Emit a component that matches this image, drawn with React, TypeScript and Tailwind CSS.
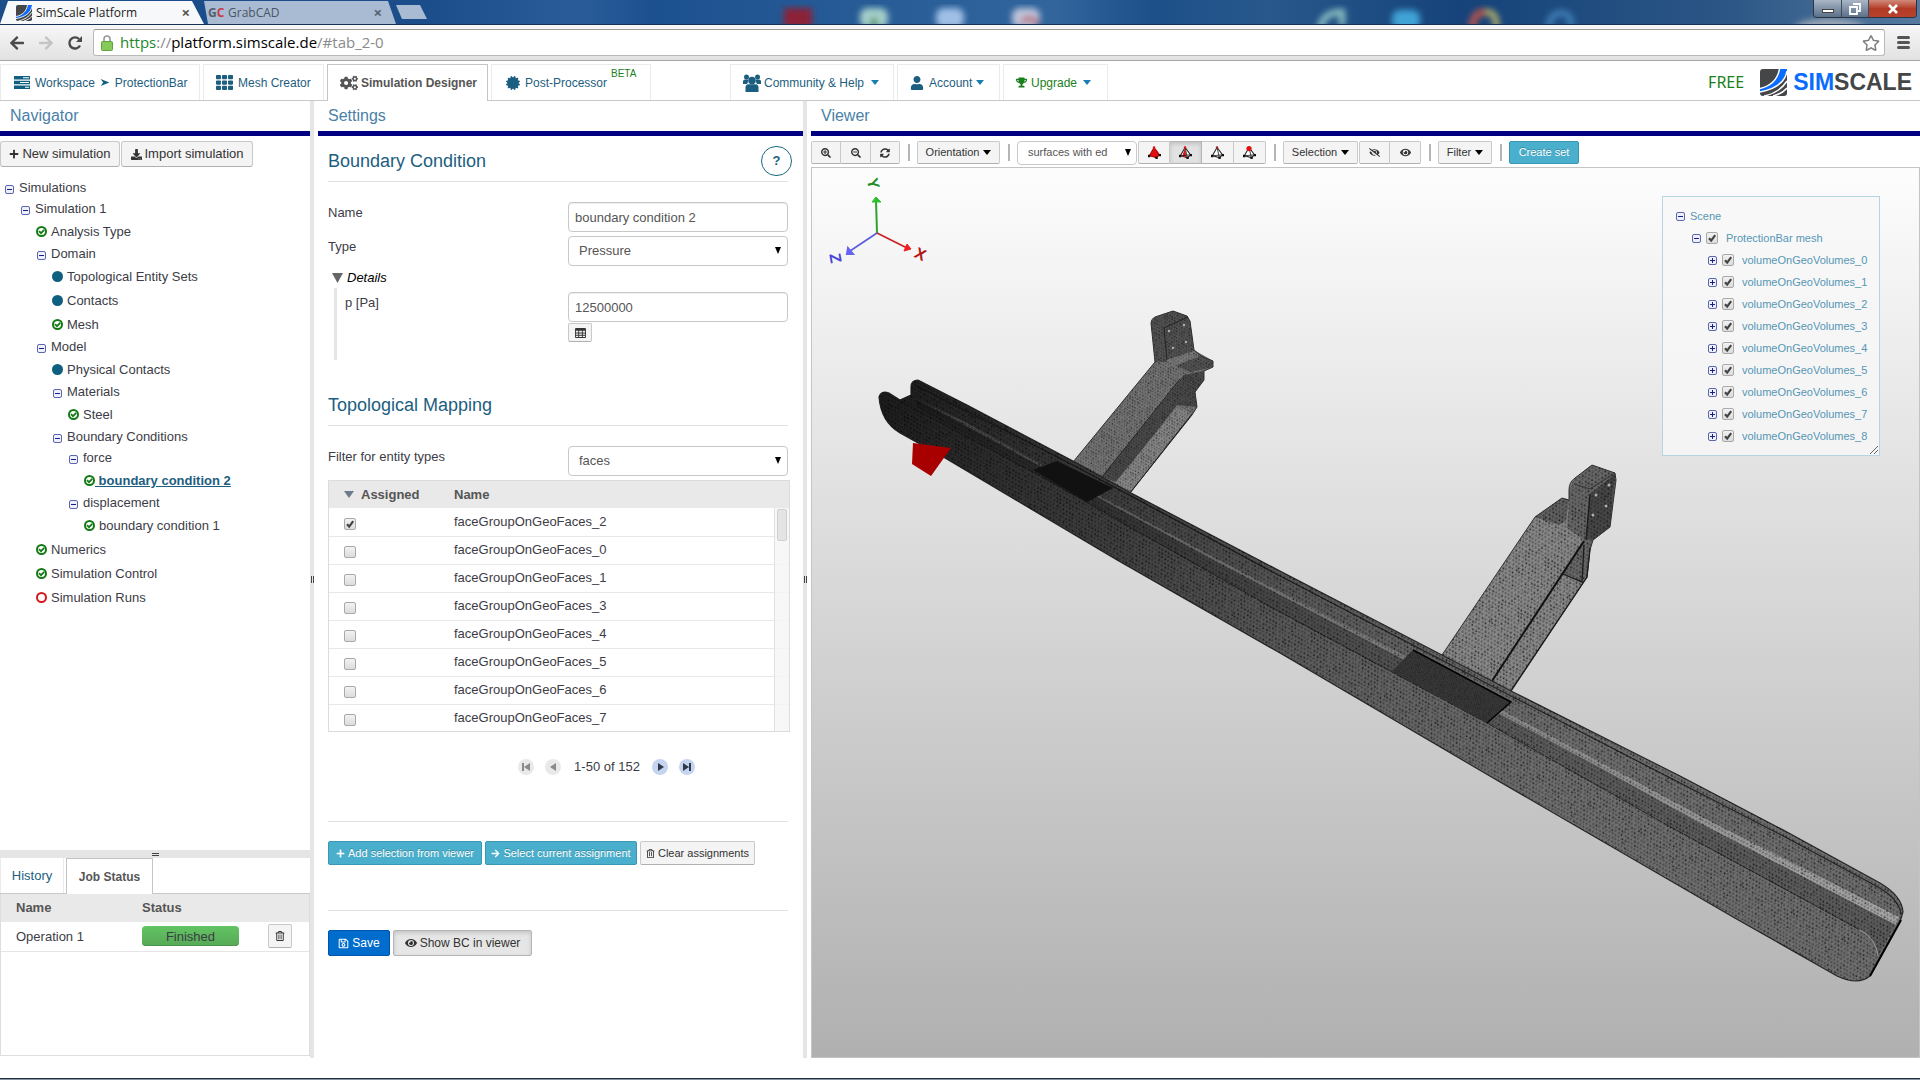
import { useState } from "react";
import type { ReactNode } from "react";
import {
  FaArrowLeft,
  FaArrowRight,
  FaCertificate,
  FaCogs,
  FaDownload,
  FaEye,
  FaEyeSlash,
  FaPlus,
  FaRegSave,
  FaRegStar,
  FaRegTrashAlt,
  FaSearchMinus,
  FaSearchPlus,
  FaSyncAlt,
  FaTh,
  FaTrophy,
  FaUser,
} from "react-icons/fa";

interface TreeRow {
  level: number;
  label: string;
  icon: "folder" | "ok" | "dot" | "ring";
  selected?: boolean;
}

const treeRows: TreeRow[] = [
  { level: 0, label: "Simulations", icon: "folder" },
  { level: 1, label: "Simulation 1", icon: "folder" },
  { level: 2, label: "Analysis Type", icon: "ok" },
  { level: 2, label: "Domain", icon: "folder" },
  { level: 3, label: "Topological Entity Sets", icon: "dot" },
  { level: 3, label: "Contacts", icon: "dot" },
  { level: 3, label: "Mesh", icon: "ok" },
  { level: 2, label: "Model", icon: "folder" },
  { level: 3, label: "Physical Contacts", icon: "dot" },
  { level: 3, label: "Materials", icon: "folder" },
  { level: 4, label: "Steel", icon: "ok" },
  { level: 3, label: "Boundary Conditions", icon: "folder" },
  { level: 4, label: "force", icon: "folder" },
  { level: 5, label: "boundary condition 2", icon: "ok", selected: true },
  { level: 4, label: "displacement", icon: "folder" },
  { level: 5, label: "boundary condition 1", icon: "ok" },
  { level: 2, label: "Numerics", icon: "ok" },
  { level: 2, label: "Simulation Control", icon: "ok" },
  { level: 2, label: "Simulation Runs", icon: "ring" },
];

const indents = ["pl-1", "pl-5", "pl-9", "pl-[52px]", "pl-[68px]", "pl-[84px]"];

const faceIds = [2, 0, 1, 3, 4, 5, 6, 7];
const volumeIds = [0, 1, 2, 3, 4, 5, 6, 7, 8];

const greyButton =
  "flex items-center justify-center border border-[#c9c9c9] border-b-[#b0b0b0] bg-[#f4f4f4] text-[#333]";
const tealButton =
  "flex items-center justify-center border border-[#3a98b5] bg-[#49afcd] text-white [text-shadow:0_-1px_0_rgba(0,0,0,0.25)]";
const fieldBox =
  "h-[30px] w-[220px] rounded border border-[#c8c8c8] bg-white text-[13px] text-[#555]";

function Toggle({ open }: { open: boolean }) {
  return (
    <svg viewBox="0 0 9 9" className="size-[9px] shrink-0">
      <rect x="0.5" y="0.5" width="8" height="8" rx="1.5" fill="#eef0fb" stroke="#5b66b0" />
      <path d={open ? "M2 4.5H7" : "M2 4.5H7M4.5 2V7"} stroke="#1c1c8c" />
    </svg>
  );
}

function StatusIcon({ icon }: { icon: TreeRow["icon"] }) {
  if (icon === "folder") {
    return (
      <span className="flex w-[11px] justify-center pt-[3px]">
        <Toggle open />
      </span>
    );
  }
  return (
    <svg viewBox="0 0 11 11" className="size-[11px] shrink-0">
      {icon === "dot" && <circle cx="5.5" cy="5.5" r="5.5" fill="#0f5f80" />}
      {icon === "ring" && <circle cx="5.5" cy="5.5" r="4.5" fill="none" stroke="#d3191e" strokeWidth="2" />}
      {icon === "ok" && (
        <>
          <circle cx="5.5" cy="5.5" r="4.5" fill="none" stroke="#137a13" strokeWidth="2" />
          <path d="M3 5.2L5 7.2L8.2 3.9" fill="none" stroke="#137a13" strokeWidth="1.8" />
        </>
      )}
    </svg>
  );
}

function Tick({ id, label, defaultChecked }: { id: string; label: string; defaultChecked?: boolean }) {
  return (
    <span className="relative flex size-3 shrink-0">
      <input
        id={id}
        type="checkbox"
        aria-label={label}
        defaultChecked={defaultChecked}
        className="peer size-3 appearance-none rounded-[2px] border border-[#a9a9a9] bg-linear-to-b from-[#f2f2f2] to-[#dcdcdc]"
      />
      <svg viewBox="0 0 12 12" className="pointer-events-none absolute inset-0 hidden size-3 peer-checked:block">
        <path d="M3 6.2L5.2 8.6L9.2 3.2" fill="none" stroke="#444" strokeWidth="2.2" />
      </svg>
    </span>
  );
}

function Caret({ className }: { className?: string }) {
  return (
    <svg viewBox="0 0 8 5" className={`h-[5px] w-2 shrink-0 ${className ?? ""}`}>
      <path d="M0 0H8L4 5Z" fill="currentColor" />
    </svg>
  );
}

function SelectArrow() {
  return (
    <svg viewBox="0 0 6 7" className="pointer-events-none absolute right-[7px] top-[11px] h-[7px] w-1.5">
      <path d="M0 0H6L3 7Z" fill="#000" />
    </svg>
  );
}

function GroupIcon({ className }: { className: string }) {
  return (
    <svg viewBox="0 0 18 18" className={className} fill="currentColor">
      <circle cx="3.500" cy="3" r="2.500" />
      <circle cx="14.500" cy="3" r="2.500" />
      <path d="M0 10V7.500Q0 5.500 2 5.500H5V8L4 10ZM18 10V7.500Q18 5.500 16 5.500H13V8L14 10Z" />
      <circle cx="9" cy="6.500" r="3.800" />
      <path d="M2.500 18V13.500Q2.500 10.500 5.500 10.300H12.500Q15.500 10.500 15.500 13.500V18Z" />
    </svg>
  );
}

function TableIcon({ className }: { className: string }) {
  return (
    <svg viewBox="0 0 12 11" className={className}>
      <rect width="12" height="11" rx="1" fill="#333" />
      <path
        d="M1 3H3.500V5H1ZM4.500 3H7.500V5H4.500ZM8.500 3H11V5H8.500ZM1 6H3.500V7.500H1ZM4.500 6H7.500V7.500H4.500ZM8.500 6H11V7.500H8.500ZM1 8.500H3.500V10H1ZM4.500 8.500H7.500V10H4.500ZM8.500 8.500H11V10H8.500Z"
        fill="#f4f4f4"
      />
    </svg>
  );
}

function Logo({ className }: { className: string }) {
  return (
    <svg viewBox="0 0 27 27" className={className}>
      <rect width="27" height="27" rx="3" fill="#444648" />
      <path d="M0 20C11 17 18 11 20 0H27C26 13 17 20 0 23Z" fill="#0a6cff" />
      <path
        d="M0 19.5C11 17 17.500 11 19.500 0M0 23C15 20 25 14 27 2M4 27C14 25 22 20 27 12M13 27C19 25.500 24 22.500 27 19"
        fill="none"
        stroke="#fff"
        strokeWidth="1.5"
      />
    </svg>
  );
}

function TitleBar() {
  return (
    <div className="relative flex h-[25px] items-end overflow-hidden border-b border-[#16305a] bg-linear-to-r from-[#1d4e89] via-[#2d629b] to-[#2a5a8c]">
      <svg width="1920" height="25" className="absolute left-0 top-0">
        <defs>
          <filter id="glass">
            <feGaussianBlur stdDeviation="3" />
          </filter>
          <linearGradient id="sky">
            <stop offset="0.22" stopColor="#1b4d8a" />
            <stop offset="0.3" stopColor="#2a5c99" />
            <stop offset="0.34" stopColor="#1c5190" />
            <stop offset="0.55" stopColor="#31659c" />
            <stop offset="0.6" stopColor="#1d4f88" />
            <stop offset="0.66" stopColor="#28588c" />
            <stop offset="0.76" stopColor="#15437a" />
            <stop offset="0.9" stopColor="#2b5685" />
            <stop offset="1" stopColor="#55799f" />
          </linearGradient>
        </defs>
        <rect width="1920" height="25" fill="url(#sky)" />
        <g filter="url(#glass)">
          <rect x="784" y="8" width="28" height="20" fill="#8c2338" />
          <rect x="860" y="8" width="28" height="20" rx="8" fill="#a5cfc9" />
          <path d="M874 18V28" stroke="#3c8c50" strokeWidth="6" />
          <rect x="936" y="8" width="28" height="20" rx="8" fill="#9fbfe6" />
          <rect x="1012" y="8" width="28" height="20" rx="8" fill="#bfc4dc" />
          <path d="M1022 22Q1030 14 1038 24" stroke="#b8403c" strokeWidth="4" fill="none" />
          <path d="M1320 30Q1322 12 1342 12L1342 26" stroke="#8fc4c4" strokeWidth="6" fill="none" />
          <rect x="1392" y="10" width="28" height="20" rx="8" fill="#3fa3d6" />
          <path d="M1472 30Q1472 12 1486 12" stroke="#b8524e" strokeWidth="7" fill="none" />
          <path d="M1486 12Q1498 12 1496 30" stroke="#b9b268" strokeWidth="6" fill="none" />
          <path d="M1548 30Q1550 12 1562 13T1570 30" stroke="#4080b8" strokeWidth="6" fill="none" />
          <ellipse cx="1830" cy="32" rx="38" ry="14" fill="#98a4b4" />
        </g>
      </svg>

      <div className="relative flex h-[23px] font-['Open_Sans',sans-serif] text-xs text-[#222]">
        <div className="flex w-[204px] items-center bg-[#f7f8f9] pl-4 pr-[14px] [clip-path:polygon(0_100%,8px_0,192px_0,100%_100%)]">
          <Logo className="size-4" />
          <span className="ml-1 flex-1">SimScale Platform</span>
          <button aria-label="Close tab" className="text-[15px] leading-none font-bold text-[#555]">×</button>
        </div>
        <div className="flex w-[192px] items-center bg-[#a9bbd2] pl-1 pr-[14px] text-[#4a5563] [clip-path:polygon(0_0,184px_0,100%_100%,4px_100%)]">
          <span className="w-5 font-bold text-[#55606e]">
            G<span className="text-[#c93b43]">C</span>
          </span>
          <span className="flex-1">GrabCAD</span>
          <button aria-label="Close tab" className="text-[15px] leading-none font-bold text-[#55606e]">×</button>
        </div>
        <button
          aria-label="New tab"
          className="mt-1 h-[14px] w-[31px] bg-[#a9bbd2] [clip-path:polygon(0_0,24px_0,100%_100%,6px_100%)]"
        />
      </div>

      <div className="relative mr-[3px] ml-auto flex h-[18px] self-start overflow-hidden rounded-b border border-t-0 border-[#2b3443] text-white">
        <button aria-label="Minimize" className="flex w-7 items-center justify-center border-r border-[#3c4a5e] bg-linear-to-b from-[#a9b6c6] to-[#5c7089]">
          <span className="mt-1 h-1 w-3 border border-[#444] bg-white" />
        </button>
        <button aria-label="Restore" className="flex w-[27px] items-center justify-center border-r border-[#3c4a5e] bg-linear-to-b from-[#a9b6c6] to-[#5c7089]">
          <svg viewBox="0 0 12 12" className="size-3">
            <path d="M4 1H11V8H9M1 4H8V11H1Z" fill="none" stroke="#fff" strokeWidth="1.800" />
          </svg>
        </button>
        <button aria-label="Close" className="flex w-[47px] items-center justify-center bg-linear-to-b from-[#d08a7a] via-[#b23a26] to-[#b8432c]">
          <svg viewBox="0 0 10 10" className="size-[10px]">
            <path d="M1 1L9 9M9 1L1 9" stroke="#fff" strokeWidth="2.600" />
          </svg>
        </button>
      </div>
    </div>
  );
}

function AddressBar() {
  return (
    <div className="flex h-9 items-center border-b border-[#a5a5a5] bg-linear-to-b from-[#f7f7f7] to-[#e2e2e2] pl-[9px] pr-1 text-[#4a4a4a]">
      <button aria-label="Back"><FaArrowLeft className="size-4" /></button>
      <button aria-label="Forward" className="ml-[13px] text-[#c4c4c4]"><FaArrowRight className="size-4" /></button>
      <button aria-label="Reload" className="ml-[13px]">
        <svg viewBox="0 0 16 16" className="size-4">
          <path d="M13 10.500A5.600 5.600 0 1 1 12 4" fill="none" stroke="#4a4a4a" strokeWidth="2.400" />
          <path d="M15 1V7H9Z" fill="#4a4a4a" />
        </svg>
      </button>
      <div className="ml-[10px] flex h-[27px] flex-1 items-center rounded-[3px] border border-[#b9b9b9] border-t-[#a09a9a] bg-white pl-[7px] pr-1">
        <svg viewBox="0 0 12 16" className="h-4 w-3">
          <path d="M3 7V4A3 3 0 0 1 9 4V7" fill="none" stroke="#999" strokeWidth="1.600" />
          <rect x="0.5" y="6.500" width="11" height="9" rx="1" fill="#86c95a" stroke="#5da53a" />
        </svg>
        <a href="#tab_2-0" className="ml-[7px] flex-1 font-['Open_Sans',sans-serif] text-[15px] text-[#8a8a8a]">
          <span className="text-[#26862c]">https</span>://<span className="text-black">platform.simscale.de</span>/#tab_2-0
        </a>
        <FaRegStar className="size-[18px] text-[#808080]" />
      </div>
      <button aria-label="Menu" className="ml-3 flex flex-col gap-[2px] pr-1.5">
        <span className="h-[3px] w-[13px] rounded-sm bg-[#555]" />
        <span className="h-[3px] w-[13px] rounded-sm bg-[#555]" />
        <span className="h-[3px] w-[13px] rounded-sm bg-[#555]" />
      </button>
    </div>
  );
}

function MainNav() {
  const tab = "flex h-9 items-center border border-b-0 border-[#ebebeb]";
  return (
    <nav className="flex h-10 items-end gap-[3px] border-b border-[#c9c9c9] text-xs text-[#1c5e80]">
      <a href="#workspace" className={`${tab} w-[200px] pl-[13px]`}>
        <svg viewBox="0 0 16 13" className="mr-[5px] h-[13px] w-4">
          <path d="M0 0H16V3.500H0ZM0 4.700H16V8.200H0ZM0 9.500H16V13H0Z" fill="#0f5f80" />
          <path d="M9 1.200H15V2.300H9ZM6 5.900H15V7H6ZM11 10.700H15V11.800H11Z" fill="#fff" />
        </svg>
        Workspace
        <svg viewBox="0 0 10 8" className="mx-[5px] h-[7px] w-[10px]">
          <path d="M0 0L10 4L0 8L3 4Z" fill="#0f5f80" />
        </svg>
        ProtectionBar
      </a>
      <a href="#mesh" className={`${tab} w-[121px] pl-3`}>
        <FaTh className="mr-[5px] size-[17px]" />
        Mesh Creator
      </a>
      <a href="#designer" className="-mb-px flex h-[37px] w-[161px] items-center border border-b-0 border-[#c4c4c4] bg-white pb-px pl-3 font-bold text-[#555]">
        <FaCogs className="mr-[3px] size-[18px]" />
        Simulation Designer
      </a>
      <a href="#post" className={`${tab} w-[160px] pl-[14px]`}>
        <FaCertificate className="mr-[5px] size-[14px]" />
        Post-Processor
        <span className="ml-1 self-start pt-0.5 text-[10px] text-[#1b7f1b]">BETA</span>
      </a>
      <a href="#community" className={`${tab} ml-[76px] w-[164px] pl-3`}>
        <GroupIcon className="mr-[3px] size-[18px]" />
        Community &amp; Help
        <Caret className="ml-[7px] text-[#1a7db0]" />
      </a>
      <a href="#account" className={`${tab} w-[103px] pl-3`}>
        <FaUser className="mr-[5px] size-[14px]" />
        Account
        <Caret className="ml-1 text-[#1a7db0]" />
      </a>
      <a href="#upgrade" className={`${tab} w-[105px] pl-3 text-[#1b7f1b]`}>
        <FaTrophy className="mr-1 size-[11px]" />
        Upgrade
        <Caret className="ml-1.5 text-[#1a7db0]" />
      </a>
      <div className="mr-2 ml-auto flex h-9 items-center">
        <span className="font-['Noto_Sans',sans-serif] text-base text-[#1b7f1b]">FREE</span>
        <Logo className="ml-4 size-[27px]" />
        <span className="ml-1.5 text-[23px] leading-none font-bold text-[#444648]">
          <span className="text-[#0a6cff]">SIM</span>SCALE
        </span>
      </div>
    </nav>
  );
}

function PanelTitle({ children }: { children: ReactNode }) {
  return (
    <h2 className="h-[35px] shrink-0 border-b-[5px] border-[#000080] pl-[10px] text-base leading-[30px] text-[#4a7fa7]">
      {children}
    </h2>
  );
}

function Splitter() {
  return (
    <div className="mr-1 flex w-1 shrink-0 items-center justify-center gap-px bg-[#e5e5e5]">
      <span className="h-[7px] w-px bg-[#444]" />
      <span className="h-[7px] w-px bg-[#444]" />
    </div>
  );
}

function Navigator() {
  const bigButton = `${greyButton} h-[26px] gap-[3px] rounded-[3px] text-[13px]`;
  return (
    <section className="flex w-[310px] shrink-0 flex-col">
      <PanelTitle>Navigator</PanelTitle>
      <div className="flex gap-px pt-[5px]">
        <button className={`${bigButton} w-[120px]`}>
          <FaPlus className="size-[10px]" />
          New simulation
        </button>
        <button className={`${bigButton} w-[132px]`}>
          <FaDownload className="size-[11px]" />
          Import simulation
        </button>
      </div>
      <ul className="flex-1 pt-[10px] text-[13px] text-[#3c3c46]">
        {treeRows.map((row) => (
          <li
            key={row.label}
            className={`flex items-center gap-1 ${row.icon === "folder" ? "h-[21px]" : "h-6 pt-px"} ${indents[row.level]}`}
          >
            <StatusIcon icon={row.icon} />
            {row.selected ? (
              <a href="#bc2" className="-ml-1 font-bold whitespace-pre text-[#1c5e80] underline">{` ${row.label}`}</a>
            ) : (
              <span>{row.label}</span>
            )}
          </li>
        ))}
      </ul>

      <div className="flex h-2 shrink-0 flex-col items-center justify-center gap-px bg-[#e5e5e5]">
        <span className="h-px w-[7px] bg-[#444]" />
        <span className="h-px w-[7px] bg-[#444]" />
      </div>
      <div className="flex h-9 shrink-0 gap-0.5 border-b border-[#c9c9c9] text-[13px]">
        <button className="w-16 border-x border-[#ebebeb] text-[#1c5e80]">History</button>
        <button className="-mb-px w-[87px] border border-b-0 border-[#c4c4c4] bg-white text-xs font-bold text-[#555]">
          Job Status
        </button>
      </div>
      <div className="mb-0.5 h-[162px] shrink-0 border-x border-b border-[#dedede]">
        <table className="w-full table-fixed text-left text-[13px] text-[#3c3c46]">
          <thead>
            <tr className="h-7 bg-[#e9e9e9] text-[#555]">
              <th className="w-[141px] pl-[15px]">Name</th>
              <th className="w-[126px]">Status</th>
              <th aria-label="Actions" />
            </tr>
          </thead>
          <tbody>
            <tr className="h-[29px] border-b border-[#e5e5e5]">
              <td className="pl-[15px]">Operation 1</td>
              <td>
                <span className="flex h-5 w-[97px] items-center justify-center rounded bg-linear-to-b from-[#62c462] to-[#57a957] shadow-[inset_0_-1px_0_#4a964a]">
                  Finished
                </span>
              </td>
              <td>
                <button aria-label="Delete operation" className={`${greyButton} h-6 w-6 rounded-[2px]`}>
                  <FaRegTrashAlt className="size-[10px]" />
                </button>
              </td>
            </tr>
          </tbody>
        </table>
      </div>
    </section>
  );
}

function SectionHeading({ children, extra }: { children: ReactNode; extra?: ReactNode }) {
  return (
    <div className="flex h-[46px] items-center justify-between border-b border-[#e2e2e2] pt-1">
      <h3 className="text-lg leading-6 text-[#1c5e80]">{children}</h3>
      {extra}
    </div>
  );
}

function Settings() {
  const [name, setName] = useState("boundary condition 2");
  const [pressure, setPressure] = useState("12500000");
  const pager = "flex size-4 items-center justify-center rounded-full";

  return (
    <section className="flex w-[485px] shrink-0 flex-col">
      <PanelTitle>Settings</PanelTitle>
      <div className="pl-[10px] pr-[15px] text-[13px] text-[#3c3c46]">
        <SectionHeading
          extra={
            <button className="-mr-1 h-[30px] w-[31px] rounded-full border border-[#1c6a80] font-bold text-[#1c5e80]">
              ?
            </button>
          }
        >
          Boundary Condition
        </SectionHeading>

        <div className="mt-5 flex justify-between">
          <label htmlFor="bc-name" className="leading-[22px]">Name</label>
          <input
            id="bc-name"
            value={name}
            onChange={(e) => setName(e.target.value)}
            className={`${fieldBox} px-1.5 shadow-[inset_0_1px_1px_rgba(0,0,0,0.075)]`}
          />
        </div>
        <div className="mt-1 flex justify-between">
          <label htmlFor="bc-type" className="leading-[22px]">Type</label>
          <span className="relative">
            <select id="bc-type" className={`${fieldBox} appearance-none px-[10px]`}>
              <option>Pressure</option>
            </select>
            <SelectArrow />
          </span>
        </div>
        <button className="mt-1 ml-1 flex h-4 items-center gap-1 text-black italic">
          <svg viewBox="0 0 11 10" className="h-[10px] w-[11px]">
            <path d="M0 0H11L5.500 10Z" fill="#666" />
          </svg>
          Details
        </button>
        <div className="mt-0.5 ml-1.5 flex h-[72px] justify-between border-l-[3px] border-[#e5e5e5] pt-1 pl-2">
          <label htmlFor="bc-pressure" className="leading-[22px]">p [Pa]</label>
          <div>
            <input
              id="bc-pressure"
              value={pressure}
              onChange={(e) => setPressure(e.target.value)}
              className={`${fieldBox} block px-1.5 shadow-[inset_0_1px_1px_rgba(0,0,0,0.075)]`}
            />
            <button aria-label="Open table" className={`${greyButton} mt-px h-[19px] w-6 rounded-[2px]`}>
              <TableIcon className="h-[10px] w-[11px]" />
            </button>
          </div>
        </div>

        <div className="mt-5">
          <SectionHeading>Topological Mapping</SectionHeading>
        </div>
        <div className="mt-5 flex justify-between">
          <label htmlFor="entity-filter" className="leading-[22px]">Filter for entity types</label>
          <span className="relative">
            <select id="entity-filter" className={`${fieldBox} appearance-none px-[10px]`}>
              <option>faces</option>
            </select>
            <SelectArrow />
          </span>
        </div>

        <div className="relative mt-1 -mr-0.5 h-[252px] overflow-hidden border border-[#dcdcdc]">
          <table className="w-full table-fixed text-left">
            <thead>
              <tr className="h-[27px] bg-[#e9e9e9] text-[#555]">
                <th className="w-[125px] pl-[15px]">
                  <span className="flex items-center gap-[7px]">
                    <svg viewBox="0 0 10 7" className="h-[7px] w-[10px]">
                      <path d="M0 0H10L5 7Z" fill="#6c7a8c" />
                    </svg>
                    Assigned
                  </span>
                </th>
                <th>Name</th>
              </tr>
            </thead>
            <tbody>
              {faceIds.map((id) => (
                <tr key={id} className="h-7 border-b border-[#e8e8e8]">
                  <td className="pt-1 pl-[15px]">
                    <Tick id={`face-${id}`} label={`Assign faceGroupOnGeoFaces_${id}`} defaultChecked={id === 2} />
                  </td>
                  <td>
                    <label htmlFor={`face-${id}`}>faceGroupOnGeoFaces_{id}</label>
                  </td>
                </tr>
              ))}
            </tbody>
          </table>
          <div className="absolute top-[27px] right-0 bottom-0 w-[15px] border-l border-[#e2e2e2] bg-[#f5f5f5]/80 px-0.5 pt-px">
            <div className="h-8 w-[10px] rounded-[2px] border border-[#d0d0d0] bg-[#e4e4e4]" />
          </div>
        </div>

        <div className="mt-[22px] flex h-[25px] items-center gap-[11px] pl-[190px]">
          <button aria-label="First page" className={`${pager} bg-[#e9e9e9] text-[#8a8a8a]`}>
            <svg viewBox="0 0 8 8" className="size-2"><path d="M0 0H2V8H0ZM8 0V8L2 4Z" fill="currentColor" /></svg>
          </button>
          <button aria-label="Previous page" className={`${pager} bg-[#e9e9e9] text-[#8a8a8a]`}>
            <svg viewBox="0 0 8 8" className="size-2"><path d="M7 0V8L1 4Z" fill="currentColor" /></svg>
          </button>
          <span className="w-[69px] pl-px text-center whitespace-nowrap">1-50 of 152</span>
          <button aria-label="Next page" className={`${pager} bg-[#c5d5f0] text-[#2f3b4a]`}>
            <svg viewBox="0 0 8 8" className="size-2"><path d="M2 0V8L8 4Z" fill="currentColor" /></svg>
          </button>
          <button aria-label="Last page" className={`${pager} bg-[#c5d5f0] text-[#2f3b4a]`}>
            <svg viewBox="0 0 8 8" className="size-2"><path d="M6 0H8V8H6ZM0 0V8L6 4Z" fill="currentColor" /></svg>
          </button>
        </div>

        <div className="mt-[42px] flex gap-[3px] border-t border-[#e2e2e2] pt-[19px] text-[11px]">
          <button className={`${tealButton} h-6 w-[154px] gap-[3px] rounded-[2px]`}>
            <FaPlus className="size-[9px]" />
            Add selection from viewer
          </button>
          <button className={`${tealButton} h-6 w-[152px] gap-[3px] rounded-[2px]`}>
            <FaArrowRight className="size-[9px]" />
            Select current assignment
          </button>
          <button className={`${greyButton} h-6 w-[115px] gap-[3px] rounded-[2px]`}>
            <FaRegTrashAlt className="size-[9px]" />
            Clear assignments
          </button>
        </div>
        <div className="mt-[45px] flex gap-[3px] border-t border-[#e2e2e2] pt-[19px] text-xs">
          <button className="flex h-[26px] w-[62px] items-center justify-center gap-[3px] rounded-[2px] border border-[#0055b0] bg-[#006dcc] text-white">
            <FaRegSave className="size-[11px]" />
            Save
          </button>
          <button className="flex h-[26px] w-[139px] items-center justify-center gap-[3px] rounded-[2px] border border-[#b5b5b5] bg-[#e6e6e6] text-[#333] shadow-[inset_0_2px_4px_rgba(0,0,0,0.15)]">
            <FaEye className="size-3" />
            Show BC in viewer
          </button>
        </div>
      </div>
    </section>
  );
}

const CELLS = 16;
const CELL = 4;

// Pseudo random offset, same for vertices on opposite edges so the tile repeats
function jitter(x: number, y: number, seed: number) {
  const n = Math.sin(((x + CELLS) % CELLS) * 12.9898 + ((y + CELLS) % CELLS) * 78.233 + seed) * 43758.5453;
  return n - Math.floor(n);
}

function vertex(x: number, y: number) {
  const px = (x + (y % 2) * 0.5 + jitter(x, y, 1) * 0.3) * CELL;
  const py = (y + jitter(x, y, 2) * 0.3) * CELL;
  return `${px.toFixed(1)} ${py.toFixed(1)}`;
}

function buildTile() {
  let lines = "";
  let dots = "";
  for (let x = -2; x <= CELLS; x++) {
    for (let y = -2; y <= CELLS; y++) {
      lines += `M${vertex(x + 1, y)}L${vertex(x, y)}L${vertex(x, y + 1)}`;
      lines += y % 2 ? `M${vertex(x, y)}L${vertex(x + 1, y + 1)}` : `M${vertex(x + 1, y)}L${vertex(x, y + 1)}`;
      if (jitter(x, y, 4) > 0.72) dots += `M${vertex(x, y)}h1.2v1.2h-1.2z`;
    }
  }
  return { lines, dots };
}

const tile = buildTile();

function MeshPattern({ id, transform, opacity }: { id: string; transform: string; opacity: number }) {
  const size = CELLS * CELL;
  return (
    <pattern id={id} width={size} height={size} patternUnits="userSpaceOnUse" patternTransform={transform}>
      <path d={tile.lines} fill="none" stroke="#000" strokeWidth="0.6" opacity={opacity} />
      <path d={tile.dots} fill="#000" opacity="0.9" />
    </pattern>
  );
}

const barPath =
  "M911 387Q911 380 918 380L967 405L1073 461L1133 494L1257 559L1280 571L1442 655L1513 692L1680 776L1787 832L1880 883Q1902 896 1903 912L1900 922L1870 976Q1858 986 1837 976L1733 917L1500 782L1280 653L1117 560L945 458L900 433Q881 422 879 397Q881 390 889 393L900 400L911 395Z";
const bracketA =
  "M1073 462L1155 362L1151 323Q1151 319 1155 317L1173 311L1187 316L1190 321L1194 350L1201 356L1213 361V367L1204 371V380L1195 392L1197 407L1192 415L1130 493Z";
const bracketB =
  "M1442 655L1535 517L1562 498L1569 500V490Q1569 482 1575 478L1592 465L1615 473L1616 480L1610 527L1593 540L1590 550L1587 577L1510 693Z";

function Model() {
  return (
    <svg viewBox="812 168 1107 889" preserveAspectRatio="xMinYMin meet" className="absolute inset-0 h-full w-full">
      <defs>
        <MeshPattern id="fine" transform="rotate(28) scale(0.7)" opacity={0.5} />
        <MeshPattern id="coarse" transform="rotate(28) scale(0.9)" opacity={0.45} />
        <MeshPattern id="dense" transform="rotate(40) scale(0.5)" opacity={0.7} />
        <linearGradient id="depth" gradientUnits="userSpaceOnUse" x1="880" y1="400" x2="1560" y2="760">
          <stop offset="0" stopOpacity="0.68" />
          <stop offset="0.25" stopOpacity="0.44" />
          <stop offset="0.6" stopOpacity="0.16" />
          <stop offset="1" stopOpacity="0" />
        </linearGradient>
        <linearGradient id="fade" gradientUnits="userSpaceOnUse" x1="880" y1="400" x2="1400" y2="675">
          <stop offset="0" stopColor="#fff" />
          <stop offset="1" stopColor="#000" />
        </linearGradient>
        <mask id="nearEnd" maskUnits="userSpaceOnUse" x="812" y="168" width="1107" height="889">
          <rect x="812" y="168" width="1107" height="889" fill="url(#fade)" />
        </mask>
        <linearGradient id="shine" gradientUnits="userSpaceOnUse" x1="915" y1="397" x2="1897" y2="922">
          <stop offset="0" stopColor="#555" />
          <stop offset="0.3" stopColor="#808080" />
          <stop offset="1" stopColor="#b8b8b8" />
        </linearGradient>
      </defs>

      {/* brackets */}
      <path d={bracketA} fill="#858585" />
      <path d="M1102 477L1184 375L1204 371V380L1195 392L1197 407L1177 405L1117 482Z" fill="#555" />
      <path d="M1115 483L1177 407L1192 413L1130 493Z" fill="#9a9a9a" />
      <path d="M1155 362L1151 323L1155 317L1173 311L1187 316L1190 321L1194 350L1213 361V367L1190 372L1168 362Z" fill="#5f5f5f" />
      <path d="M1166 360L1194 351L1201 356L1172 367Z" fill="#8c8c8c" />
      <path d={bracketA} fill="url(#fine)" stroke="#333" strokeWidth="1" />
      <path d="M1102 477L1180 379M1130 493L1192 414M1167 360L1164 328L1188 317" fill="none" stroke="#222" strokeWidth="1" />

      <path d={bracketB} fill="#969696" />
      <path d="M1535 517L1562 498L1569 500L1566 521L1559 525Z" fill="#6b6b6b" />
      <path d="M1569 500V490L1575 478L1592 465L1615 473L1616 480L1610 527L1593 540L1590 550L1587 577L1580 582L1563 574L1584 540L1567 528Z" fill="#727272" />
      <path d="M1590 494L1615 474L1610 527L1593 540L1586 539Z" fill="#4e4e4e" />
      <path d={bracketB} fill="url(#coarse)" stroke="#333" strokeWidth="1" />
      <path d="M1492 681L1584 541" stroke="#111" strokeWidth="2" />
      <path d="M1510 692L1587 577L1590 548M1590 494L1586 540M1563 574L1582 582L1584 545" fill="none" stroke="#1c1c1c" strokeWidth="1.300" />
      <path d="M1574 484L1590 489L1615 473" fill="none" stroke="#333" />

      <g fill="#b0b0b0">
        <circle cx="1169" cy="331" r="1.200" />
        <circle cx="1184" cy="325" r="1.200" />
        <circle cx="1173" cy="348" r="1.200" />
        <circle cx="1186" cy="342" r="1.200" />
        <circle cx="1596" cy="495" r="1.500" />
        <circle cx="1609" cy="485" r="1.500" />
        <circle cx="1593" cy="515" r="1.500" />
        <circle cx="1606" cy="506" r="1.500" />
      </g>

      {/* bar */}
      <path d={barPath} fill="#7a7a7a" />
      <path d="M915 399L1033 462L1217 560L1403 657L1500 712L1700 820L1897 922L1878 956Q1876 938 1860 930L1667 825L1487 723L1280 612L1033 472L917 408Z" fill="#666" />
      <path d={barPath} fill="url(#depth)" stroke="#2a2a2a" strokeWidth="1.200" />
      <path d="M915 398L967 423L1033 460L1217 559L1403 655L1500 709L1610 767L1700 816L1899 917L1896 925L1700 823L1610 773L1500 714L1403 659L1217 562L1033 462Z" fill="url(#shine)" />
      <path d={barPath} fill="url(#coarse)" />
      <g mask="url(#nearEnd)">
        <path d={barPath} fill="url(#dense)" opacity="0.6" />
      </g>
      <path d="M915 385L1073 465L1280 576L1513 697L1787 838L1878 887Q1899 899 1901 914" fill="none" stroke="#111" strokeWidth="1.200" opacity="0.8" />
      <path d="M900 401L1033 472L1280 612L1487 723L1667 825L1860 930" fill="none" stroke="#111" strokeDasharray="7 1" opacity="0.8" />
      <path d="M1860 930Q1876 938 1878 956" fill="none" stroke="#999" strokeWidth="1" />
      <path d="M1901 920L1870 976" stroke="#000" strokeWidth="2" />

      {/* contact areas */}
      <path d="M1033 470L1057 461L1113 488L1087 502Z" fill="#111" />
      <path d="M1392 671L1413 650L1511 702L1487 723Z" fill="#484848" />
      <path d="M1392 671L1413 650L1511 702L1487 723Z" fill="url(#dense)" />
      <path d="M1413 650L1511 702L1487 723" fill="none" stroke="#000" strokeWidth="1.500" />

      <path d="M913 443L951 448L931 476L912 464Z" fill="#a80000" />

      {/* orientation axes */}
      <path d="M877 233L876 200" stroke="#2fa32f" strokeWidth="2" />
      <path d="M872 202L876 197L881 202Z" fill="#2fc02f" stroke="#2fc02f" />
      <path d="M877 233L907 248" stroke="#c82222" strokeWidth="1.600" />
      <path d="M907 244L911 249L904 251Z" fill="#f02020" stroke="#f02020" />
      <path d="M877 233L850 251" stroke="#5a5adc" strokeWidth="1.600" />
      <path d="M848 248L847 254L853 254Z" fill="#6464f0" stroke="#6464f0" strokeWidth="2" />
      <g className="font-['Liberation_Sans',sans-serif] text-base font-bold" textAnchor="middle">
        <text transform="translate(868 185) rotate(75)" fill="#238c23">Y</text>
        <text transform="translate(918 259) rotate(25)" fill="#b01818">X</text>
        <text transform="translate(830 259) rotate(80)" fill="#4646d8">Z</text>
      </g>
    </svg>
  );
}

function SceneTree() {
  return (
    <div className="absolute top-7 right-[39px] h-[260px] w-[218px] border border-[#b5d5e2] bg-[#f7f7f7]/80 pt-2 pl-[13px] text-[11px] text-[#5596b5]">
      <div className="flex h-[22px] items-center gap-[5px]">
        <Toggle open />
        <span>Scene</span>
      </div>
      <div className="flex h-[22px] items-center gap-[5px] pl-4">
        <Toggle open />
        <Tick id="scene-mesh" label="Show ProtectionBar mesh" defaultChecked />
        <label htmlFor="scene-mesh" className="pl-[3px]">ProtectionBar mesh</label>
      </div>
      {volumeIds.map((id) => (
        <div key={id} className="flex h-[22px] items-center gap-[5px] pl-8">
          <Toggle open={false} />
          <Tick id={`volume-${id}`} label={`Show volumeOnGeoVolumes_${id}`} defaultChecked />
          <label htmlFor={`volume-${id}`} className="pl-[3px]">volumeOnGeoVolumes_{id}</label>
        </div>
      ))}
      <svg viewBox="0 0 8 8" className="absolute right-px bottom-px size-2">
        <path d="M0 8L8 0M4 8L8 4" stroke="#555" strokeWidth="0.900" />
      </svg>
    </div>
  );
}

function RenderModeIcon({ mode }: { mode: "surface" | "half" | "wire" | "point" }) {
  return (
    <svg viewBox="0 0 14 14" className="h-[13px] w-[13px]">
      <path
        d="M6.500 1.500L1.500 10.500L9 12.500L12.500 9.500Z"
        fill={mode === "surface" ? "#e01010" : "#fff"}
        stroke={mode === "surface" ? "#a00" : "#222"}
        strokeWidth="1.100"
      />
      {mode === "half" && <path d="M6.500 1.500L3.500 11L8 12Z" fill="#e01010" />}
      {mode !== "surface" && <path d="M6.500 1.500L9 12.500M1.500 10.500L12.500 9.500" stroke="#222" strokeWidth="0.900" />}
      {mode === "point" && <circle cx="6.500" cy="2.800" r="2.800" fill="#e01010" />}
      {mode !== "point" && <circle cx="6.500" cy="1.600" r="1.300" fill={mode === "wire" ? "#a22" : "#e01010"} />}
      <path d="M0 9.500H2.500V12H0ZM8 11.500H10.500V14H8ZM11.500 8.500H14V11H11.500Z" fill="#111" />
    </svg>
  );
}

function Separator() {
  return <span className="mr-[7px] ml-2 h-[17px] w-0.5 shrink-0 bg-[#b5b5b5]" />;
}

function Viewer() {
  const tool = `${greyButton} h-[23px]`;
  return (
    <section className="flex min-w-0 flex-1 flex-col">
      <PanelTitle>Viewer</PanelTitle>
      <div className="flex h-[31px] shrink-0 items-center pt-0.5 text-[11px]">
        <button aria-label="Zoom in" className={`${tool} w-[30px] rounded-l-[2px]`}><FaSearchPlus className="size-[10px]" /></button>
        <button aria-label="Zoom out" className={`${tool} w-[30px] border-l-0`}><FaSearchMinus className="size-[10px]" /></button>
        <button aria-label="Reset view" className={`${tool} w-[29px] rounded-r-[2px] border-l-0`}><FaSyncAlt className="size-[10px]" /></button>
        <Separator />
        <button className={`${tool} w-[83px] gap-1 rounded-[2px]`}>Orientation<Caret className="text-black" /></button>
        <Separator />
        <span className="relative mr-px">
          <select aria-label="Render mode" className="block h-6 w-[120px] appearance-none rounded border border-[#c8c8c8] bg-white px-[10px] text-[11px] text-[#555]">
            <option>surfaces with ed</option>
          </select>
          <svg viewBox="0 0 6 7" className="pointer-events-none absolute top-2 right-1.5 h-[7px] w-1.5">
            <path d="M0 0H6L3 7Z" fill="#000" />
          </svg>
        </span>
        <button aria-label="Surfaces" className={`${tool} w-8 rounded-l-[2px]`}><RenderModeIcon mode="surface" /></button>
        <button aria-label="Surfaces with edges" className="flex h-[23px] w-8 items-center justify-center border border-l-0 border-[#b5b5b5] bg-[#e2e2e2] shadow-[inset_0_2px_4px_rgba(0,0,0,0.15)]"><RenderModeIcon mode="half" /></button>
        <button aria-label="Wireframe" className={`${tool} w-8 border-l-0`}><RenderModeIcon mode="wire" /></button>
        <button aria-label="Points" className={`${tool} w-8 rounded-r-[2px] border-l-0`}><RenderModeIcon mode="point" /></button>
        <Separator />
        <button className={`${tool} mr-px w-[75px] gap-1 rounded-[2px]`}>Selection<Caret className="text-black" /></button>
        <button aria-label="Hide selection" className={`${tool} w-[31px] rounded-l-[2px]`}><FaEyeSlash className="size-[11px]" /></button>
        <button aria-label="Show selection" className={`${tool} w-[31px] rounded-r-[2px] border-l-0`}><FaEye className="size-[11px]" /></button>
        <Separator />
        <button className={`${tool} w-[54px] gap-1 rounded-[2px]`}>Filter<Caret className="text-black" /></button>
        <Separator />
        <button className={`${tealButton} h-[23px] w-[70px] rounded-[2px]`}>Create set</button>
      </div>
      <div className="relative flex-1 border border-[#c4c4c4] bg-linear-to-b from-[#fdfdfd] to-[#b0b0b0]">
        <Model />
        <SceneTree />
      </div>
    </section>
  );
}

export default function App() {
  return (
    <div className="flex h-screen min-h-[900px] flex-col bg-white font-['Liberation_Sans',Arial,sans-serif]">
      <TitleBar />
      <AddressBar />
      <MainNav />
      <main className="flex min-h-0 flex-1">
        <Navigator />
        <Splitter />
        <Settings />
        <Splitter />
        <Viewer />
      </main>
      <footer className="mt-5 h-0.5 shrink-0 border-t border-[#1f2f45] bg-[#8a94a0]" />
    </div>
  );
}
